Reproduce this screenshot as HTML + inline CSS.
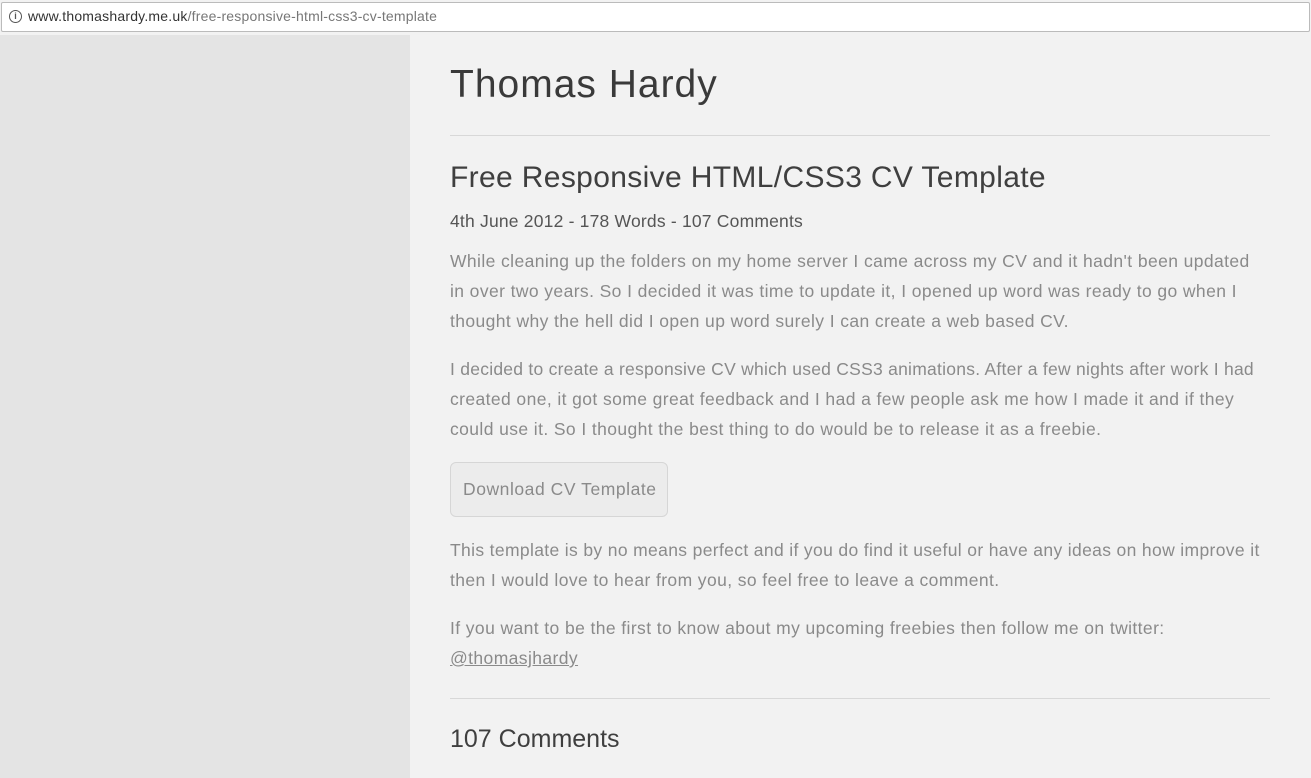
<!DOCTYPE html>
<html><head><style>
*{margin:0;padding:0;box-sizing:border-box}
body{width:1311px;height:778px;overflow:hidden;background:#f2f2f2;font-family:"Liberation Sans",sans-serif;position:relative}
.bar{position:absolute;left:0;top:0;width:1311px;height:35px;background:#f2f2f2}
.addr{position:absolute;left:1px;top:2px;width:1309px;height:30px;background:#fff;border:1px solid #bbb;border-radius:2px}
.addr .i{position:absolute;left:7px;top:7px;width:13px;height:13px;border:1.5px solid #555;border-radius:50%;font-size:9px;line-height:10px;text-align:center;color:#555;font-weight:bold}
.addr .u{position:absolute;left:26px;top:5px;font-size:14px;color:#333;white-space:nowrap;letter-spacing:0.2px}
.addr .u span{color:#777}
.side{position:absolute;left:0;top:35px;width:410px;height:743px;background:#e4e4e4}
.t{position:absolute;white-space:nowrap;color:#444}
.p{position:absolute;white-space:nowrap;color:#8a8a8a;font-size:17.5px;letter-spacing:0.4px}
.hr{position:absolute;left:450px;width:820px;height:1px;background:#d8d8d8}
.btn{position:absolute;left:450px;top:462px;width:218px;height:55px;border:1px solid #d6d6d6;border-radius:6px;background:#ececec;color:#8a8a8a;font-size:17.5px;line-height:53px;padding-left:12px;white-space:nowrap;letter-spacing:0.55px}
</style></head><body>
<div class="bar"><div class="addr"><div class="i">i</div><div class="u">www.thomashardy.me.uk<span>/free-responsive-html-css3-cv-template</span></div></div></div>
<div class="side"></div>
<div class="t" style="left:450px;top:63px;font-size:39px;color:#3a3a3a;letter-spacing:1px">Thomas Hardy</div>
<div class="hr" style="top:135px"></div>
<div class="t" style="left:450px;top:161px;font-size:30px;color:#3f3f3f;letter-spacing:0.35px">Free Responsive HTML/CSS3 CV Template</div>
<div class="t" style="left:450px;top:211px;font-size:17.5px;color:#555;letter-spacing:0.2px">4th June 2012 - 178 Words - 107 Comments</div>
<div class="p" style="left:450px;top:251px">While cleaning up the folders on my home server I came across my CV and it hadn't been updated</div>
<div class="p" style="left:450px;top:281px">in over two years. So I decided it was time to update it, I opened up word was ready to go when I</div>
<div class="p" style="left:450px;top:311px">thought why the hell did I open up word surely I can create a web based CV.</div>
<div class="p" style="left:450px;top:359px;letter-spacing:0.25px">I decided to create a responsive CV which used CSS3 animations. After a few nights after work I had</div>
<div class="p" style="left:450px;top:389px">created one, it got some great feedback and I had a few people ask me how I made it and if they</div>
<div class="p" style="left:450px;top:419px">could use it. So I thought the best thing to do would be to release it as a freebie.</div>
<div class="btn">Download CV Template</div>
<div class="p" style="left:450px;top:540px;letter-spacing:0.35px">This template is by no means perfect and if you do find it useful or have any ideas on how improve it</div>
<div class="p" style="left:450px;top:570px">then I would love to hear from you, so feel free to leave a comment.</div>
<div class="p" style="left:450px;top:618px">If you want to be the first to know about my upcoming freebies then follow me on twitter:</div>
<div class="p" style="left:450px;top:648px;text-decoration:underline">@thomasjhardy</div>
<div class="hr" style="top:698px"></div>
<div class="t" style="left:450px;top:725px;font-size:25px;color:#3f3f3f">107 Comments</div>
</body></html>
